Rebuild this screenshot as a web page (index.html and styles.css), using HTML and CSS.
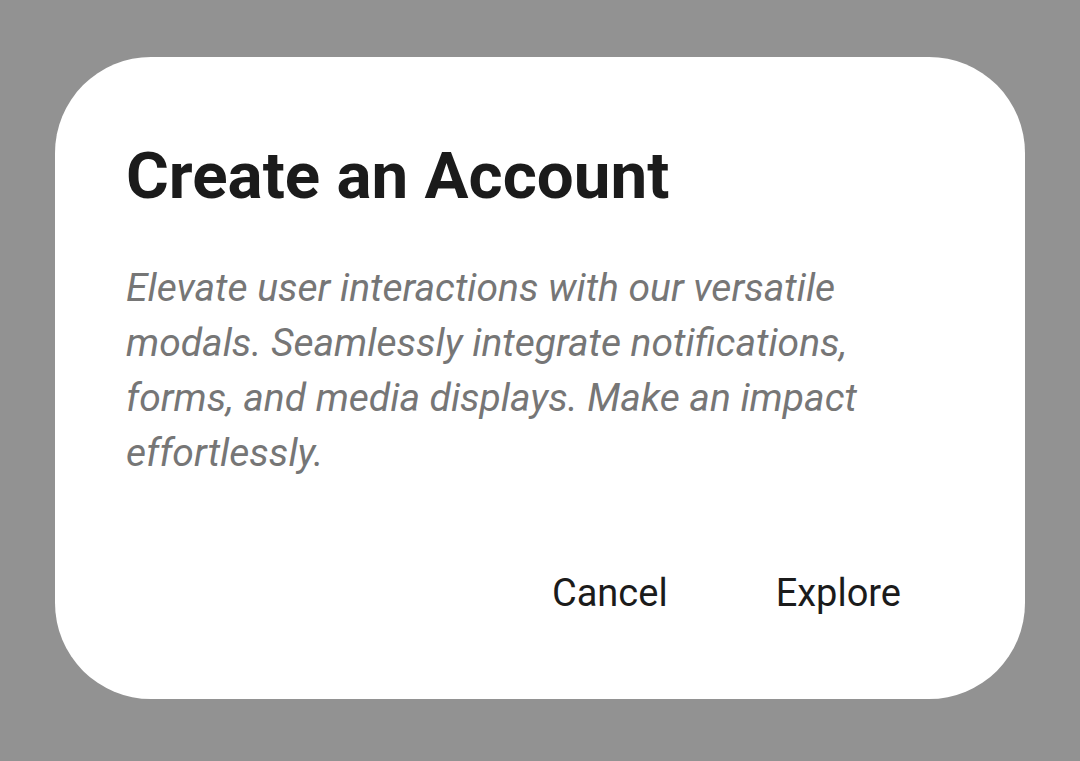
FILE: index.html
```html
<!DOCTYPE html>
<html lang="en">
<head>
<meta charset="utf-8">
<title>Create an Account</title>
<link rel="stylesheet" href="styles.css">
</head>
<body>
<div class="backdrop">
  <div class="modal">
    <h1 class="title">Create an Account</h1>
    <p class="body">Elevate user interactions with our versatile modals. Seamlessly integrate notifications, forms, and media displays. Make an impact effortlessly.</p>
    <div class="actions">
      <button class="btn">Cancel</button>
      <button class="btn">Explore</button>
    </div>
  </div>
</div>
</body>
</html>
```

FILE: styles.css
```css
html, body {
  margin: 0;
  padding: 0;
  height: 100%;
}
body {
  background: #929292;
  font-family: Roboto, "Liberation Sans", sans-serif;
}
.backdrop {
  padding: 57px 55px 0 55px;
}
.modal {
  background: #ffffff;
  border-radius: 96px;
  height: 642px;
  box-sizing: border-box;
  padding: 79px 71px 0 71px;
  display: flex;
  flex-direction: column;
}
.title {
  margin: 0;
  font-size: 65.5px;
  font-weight: 700;
  line-height: 80px;
  color: #1b1b1b;
}
.body {
  margin: 45px 0 0 0;
  max-width: 780px;
  font-size: 39px;
  font-style: italic;
  font-weight: 400;
  line-height: 55px;
  color: #767676;
}
.actions {
  margin-top: 87px;
  display: flex;
  justify-content: flex-end;
  gap: 108px;
  padding-right: 53px;
}
.btn {
  border: 0;
  background: none;
  padding: 0;
  font-family: Roboto, "Liberation Sans", sans-serif;
  font-size: 38px;
  font-weight: 400;
  line-height: 50px;
  color: #1b1b1b;
}
```
